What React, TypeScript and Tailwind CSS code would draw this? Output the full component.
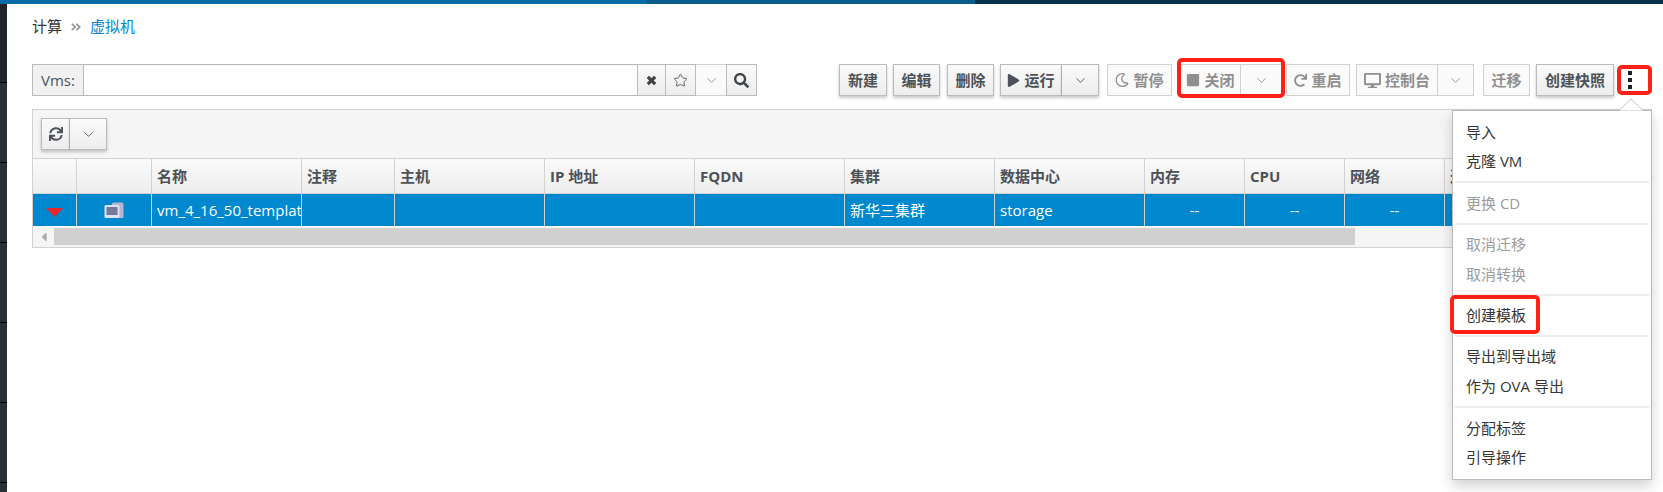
import React from "react";
import { FaRegMoon, FaSearch, FaPlay, FaStop, FaRedo, FaDesktop, FaSync, FaCaretLeft, FaAngleDoubleRight } from "react-icons/fa";
import { ChevronDown, Star } from "lucide-react";

const font = "font-['Open_Sans','Noto_Sans_CJK_SC',sans-serif]";

function Chev({ dim }: { dim?: boolean }) {
  return <ChevronDown size={15} strokeWidth={1.4} className={dim ? "text-[#8b8d8f]" : "text-[#4d5258]"} />;
}

const active = "bg-gradient-to-b from-[#fafafa] to-[#ededed] border border-[#bbb] text-[#4d5258] font-semibold shadow-[0_2px_3px_rgba(0,0,0,0.22)]";
const disabled = "bg-[#fafafa] border border-[#d1d1d1] text-[#8f8f8f] font-semibold";

function Btn({ w, label, icon, dim, extra }: { w: string; label?: string; icon?: React.ReactNode; dim?: boolean; extra?: string }) {
  return (
    <button className={`${w} h-8 flex items-center justify-center gap-1 text-[15px] ${dim ? disabled : active} ${extra ?? ""}`}>
      {icon}
      {label}
    </button>
  );
}

const cols = [
  { w: "w-[44px]", h: "" },
  { w: "w-[75px]", h: "" },
  { w: "w-[150px]", h: "名称" },
  { w: "w-[93px]", h: "注释" },
  { w: "w-[150px]", h: "主机" },
  { w: "w-[150px]", h: "IP 地址" },
  { w: "w-[150px]", h: "FQDN" },
  { w: "w-[150px]", h: "集群" },
  { w: "w-[150px]", h: "数据中心" },
  { w: "w-[100px]", h: "内存" },
  { w: "w-[100px]", h: "CPU" },
  { w: "w-[100px]", h: "网络" },
  { w: "w-[208px]", h: "迁移" },
];

function MenuItem({ t, off }: { t: string; off?: boolean }) {
  return <div className={`h-[29.7px] flex items-center pl-[13px] ${off ? "text-[#9c9c9c]" : "text-[#363636]"}`}>{t}</div>;
}
function MenuSep() {
  return <div className="h-[2px] bg-[#ededed] my-[4.85px] mx-[2px]" />;
}

export default function App() {
  return (
    <div className={`relative w-[1663px] h-[492px] overflow-hidden bg-white flex flex-col ${font} text-[15px] text-[#363636]`}>
      <div className="h-1 shrink-0 flex">
        <div className="w-[647px] bg-[#0b6aa8]" />
        <div className="w-[328px] bg-[#0a5a8c]" />
        <div className="flex-1 bg-[#04324f]" />
      </div>
      <div className="flex flex-1 min-h-0">
        <div className="w-[7px] shrink-0 flex flex-col bg-[#2b3038]">
          <div className="h-[79px] shrink-0 bg-[#22252b] border-b border-black" />
          {[0, 1, 2, 3, 4].map((i) => (
            <div key={i} className="h-[80px] shrink-0 border-b border-black" />
          ))}
        </div>
        <div className="flex-1 min-w-0 pl-[25px] pr-[11px]">
          <div className="h-[60px] flex items-start pt-[11px] leading-[22px]">
            <span>计算</span>
            <FaAngleDoubleRight size={12} className="mx-[8px] mt-[6px] text-[#9c9c9c]" />
            <span className="text-[#0088ce]">虚拟机</span>
          </div>
          <div className="flex h-8 items-stretch">
            <div className="flex w-[725px]">
              <div className="w-[52px] bg-[#f1f1f1] border border-[#bbb] flex items-center justify-center text-[#4d5258]">Vms:</div>
              <div className="w-[553px] border-y border-[#bbb] bg-white shadow-[inset_0_1px_1px_rgba(0,0,0,0.06)]" />
              <button className="w-[29px] bg-gradient-to-b from-[#fafafa] to-[#ededed] border border-[#bbb] flex items-center justify-center">
                <svg width="11" height="11" viewBox="0 0 11 11"><path d="M1.8 1.8l7.4 7.4M9.2 1.8L1.8 9.2" stroke="#3f4449" strokeWidth="3.2" /></svg>
              </button>
              <button className="w-[30px] bg-gradient-to-b from-[#fafafa] to-[#ededed] border-y border-r border-[#bbb] flex items-center justify-center"><Star size={15} strokeWidth={1.4} className="text-[#4d5258]" /></button>
              <button className="w-[30px] bg-[#fafafa] border-y border-[#d1d1d1] flex items-center justify-center"><Chev dim /></button>
              <button className="w-[31px] bg-gradient-to-b from-[#fafafa] to-[#ededed] border border-[#bbb] flex items-center justify-center"><FaSearch size={15} className="text-[#3f4449]" /></button>
            </div>
            <div className="ml-[82px] flex">
              <Btn w="w-[48px]" label="新建" />
              <Btn w="w-[47px]" label="编辑" extra="ml-[6px]" />
              <Btn w="w-[47px]" label="删除" extra="ml-[7px]" />
              <Btn w="w-[62px]" label="运行" icon={<FaPlay size={13} />} extra="ml-[6px]" />
              <Btn w="w-[37px]" icon={<Chev />} extra="border-l-0" />
              <Btn w="w-[65px]" dim label="暂停" icon={<FaRegMoon size={14} />} extra="ml-[8px]" />
              <Btn w="w-[61px]" dim label="关闭" icon={<FaStop size={14} />} extra="ml-[8px]" />
              <Btn w="w-[42px]" dim icon={<Chev dim />} extra="border-l-0" />
              <Btn w="w-[64px]" dim label="重启" icon={<FaRedo size={13} />} extra="ml-[3px]" />
              <Btn w="w-[82px]" dim label="控制台" icon={<FaDesktop size={17} />} extra="ml-[6px]" />
              <Btn w="w-[36px]" dim icon={<Chev dim />} extra="border-l-0" />
              <Btn w="w-[47px]" dim label="迁移" extra="ml-[9px]" />
              <Btn w="w-[78px]" label="创建快照" extra="ml-[6px]" />
              <div className="w-[32px] flex items-center justify-center">
                <span className="flex flex-col gap-[3px]">
                  <i className="block w-[4px] h-[4px] bg-[#222]" />
                  <i className="block w-[4px] h-[4px] bg-[#222]" />
                  <i className="block w-[4px] h-[4px] bg-[#222]" />
                </span>
              </div>
            </div>
          </div>
          <div className="mt-[13px] border border-[#d1d1d1] overflow-hidden">
            <div className="h-[49px] bg-[#f5f5f5] border-b border-[#d1d1d1] flex items-center pl-[8px]">
              <div className="flex">
                <Btn w="w-[29px]" icon={<FaSync size={14} />} />
                <Btn w="w-[37px]" icon={<Chev />} extra="border-l-0" />
              </div>
            </div>
            <div className="flex h-[35px] bg-gradient-to-b from-[#fafafa] to-[#ededed] border-b border-[#d1d1d1] font-bold text-[#4d5258]">
              {cols.map((c, i) => (
                <div key={i} className={`${c.w} shrink-0 flex items-center pl-[5px] border-r border-[#d1d1d1]`}>{c.h}</div>
              ))}
            </div>
            <div className="flex h-[32px] bg-[#0088ce] text-white">
              <div className="w-[44px] shrink-0 flex items-center justify-center border-r border-[#d1d1d1]">
                <svg className="mt-[5px]" width="17" height="9" viewBox="0 0 17 9"><path d="M0 0h17L8.5 9z" fill="#e8272b" /></svg>
              </div>
              <div className="w-[75px] shrink-0 flex items-center justify-center border-r border-[#d1d1d1]">
                <svg width="20" height="17" viewBox="0 0 20 17">
                  <rect x="8" y="0.5" width="11.5" height="15.5" rx="1.5" fill="#b4b7d2" />
                  <rect x="0.5" y="3" width="15" height="13" rx="1.5" fill="#dfe1ec" />
                  <rect x="2.5" y="5" width="11" height="8" fill="#75789f" />
                </svg>
              </div>
              <div className="w-[150px] shrink-0 flex items-center pl-[5px] border-r border-[#d1d1d1] overflow-hidden whitespace-nowrap">vm_4_16_50_template</div>
              <div className="w-[93px] shrink-0 border-r border-[#d1d1d1]" />
              <div className="w-[150px] shrink-0 border-r border-[#d1d1d1]" />
              <div className="w-[150px] shrink-0 border-r border-[#d1d1d1]" />
              <div className="w-[150px] shrink-0 border-r border-[#d1d1d1]" />
              <div className="w-[150px] shrink-0 flex items-center pl-[5px] border-r border-[#d1d1d1]">新华三集群</div>
              <div className="w-[150px] shrink-0 flex items-center pl-[5px] border-r border-[#d1d1d1]">storage</div>
              {[0, 1, 2].map((i) => (
                <div key={i} className="w-[100px] shrink-0 flex items-center justify-center border-r border-[#d1d1d1]">--</div>
              ))}
              <div className="w-[208px] shrink-0 flex items-center pl-[5px]">1%</div>
            </div>
            <div className="h-[21px] bg-[#f5f5f5] flex items-center">
              <div className="w-[21px] flex items-center justify-center"><FaCaretLeft size={14} className="text-[#a9a9a9]" /></div>
              <div className="w-[1301px] h-[17px] bg-[#d0d0d0]" />
            </div>
          </div>
        </div>
      </div>

      {/* dropdown */}
      <div className="absolute left-[1452px] top-[110px] w-[200px] h-[370px] bg-white border border-[#bbb] shadow-[0_6px_12px_rgba(0,0,0,0.18)] pt-[6px]">
        <MenuItem t="导入" />
        <MenuItem t="克隆 VM" />
        <MenuSep />
        <MenuItem t="更换 CD" off />
        <MenuSep />
        <MenuItem t="取消迁移" off />
        <MenuItem t="取消转换" off />
        <MenuSep />
        <MenuItem t="创建模板" />
        <MenuSep />
        <MenuItem t="导出到导出域" />
        <MenuItem t="作为 OVA 导出" />
        <MenuSep />
        <MenuItem t="分配标签" />
        <MenuItem t="引导操作" />
      </div>
      <svg className="absolute left-[1618px] top-[98px]" width="26" height="13" viewBox="0 0 26 13">
        <path d="M1 12.5 L13 1 L25 12.5" fill="#fff" stroke="#c4c4c4" />
      </svg>

      {/* red annotation boxes */}
      <div className="absolute left-[1177px] top-[58px] w-[108px] h-[40px] border-[4px] border-[#ff2018] rounded-[5px]" />
      <div className="absolute left-[1617px] top-[65px] w-[35px] h-[30px] border-[4px] border-[#ff2018] rounded-[5px]" />
      <div className="absolute left-[1450px] top-[295px] w-[90px] h-[39px] border-[4px] border-[#ff2018] rounded-[5px]" />
    </div>
  );
}
